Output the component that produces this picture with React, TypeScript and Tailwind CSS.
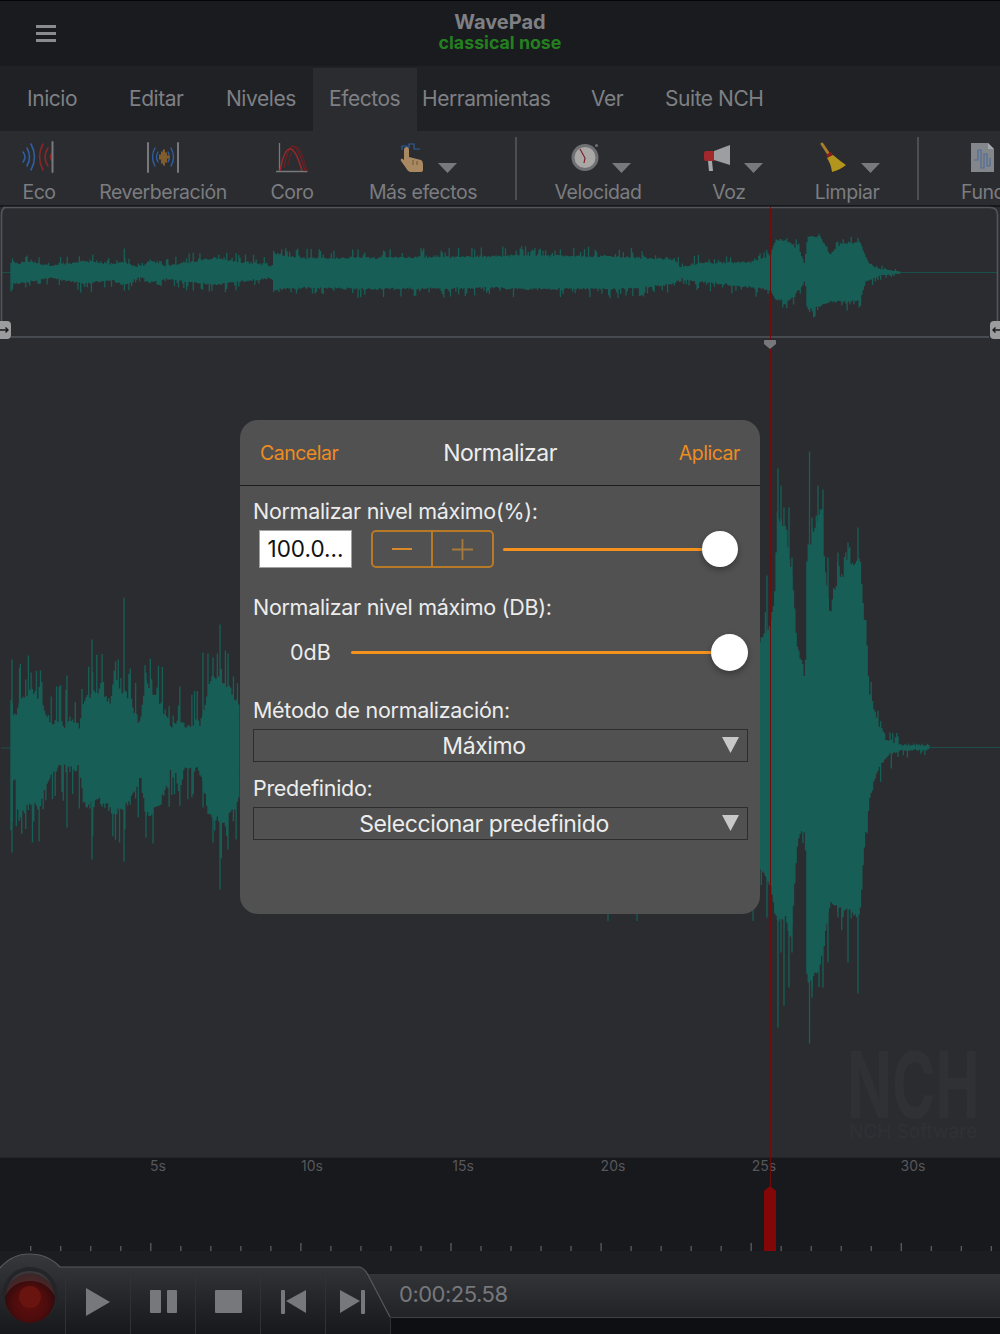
import React from "react";

type P = [number, number];

function interp(pts: P[], x: number) {
  if (x <= pts[0][0]) return pts[0][1];
  for (let i = 1; i < pts.length; i++) {
    if (x <= pts[i][0]) {
      const [a, b] = pts[i - 1];
      const [c, d] = pts[i];
      return b + ((d - b) * (x - a)) / (c - a);
    }
  }
  return pts[pts.length - 1][1];
}

function rng(seed: number) {
  let s = seed;
  return () => {
    s = (s * 16807) % 2147483647;
    return s / 2147483647;
  };
}

function wave(x0: number, x1: number, cy: number, up: P[], lo: P[], spike: number, prob: number, seed: number, extra: [number, number, number][] = []) {
  const r = rng(seed);
  for (let i = 0; i < 10; i++) r();
  let d = "";
  for (let x = x0; x < x1; x += 1.34) {
    let u = interp(up, x);
    let l = interp(lo, x);
    const k = Math.min(1, u / 10 + 0.1);
    if (r() < prob) u += r() * spike * k;
    else u += (r() - 0.3) * spike * 0.2 * k;
    if (r() < prob) l += r() * spike * k;
    else l += (r() - 0.3) * spike * 0.2 * k;
    d += `M${x.toFixed(2)} ${(cy - u).toFixed(1)}V${(cy + l).toFixed(1)}`;
  }
  for (const [x, a, b] of extra) d += `M${x} ${cy - a}V${cy + b}`;
  return d;
}

const miniUp: P[] = [[11, 10], [20, 9], [30, 11], [50, 6], [85, 11], [110, 8], [125, 10], [140, 4], [150, 12], [165, 6], [215, 14], [240, 10], [265, 8], [272, 5], [274, 19], [300, 14], [370, 14], [500, 16], [525, 17], [630, 15], [675, 12], [680, 5], [700, 9], [750, 10], [770, 16], [776, 33], [790, 30], [800, 20], [805, 8], [808, 35], [820, 36], [830, 18], [840, 27], [860, 31], [868, 10], [877, 4], [890, 2], [900, 1]];
const miniLo: P[] = [[11, 11], [30, 9], [50, 5], [85, 11], [110, 7], [125, 12], [140, 4], [150, 10], [165, 6], [215, 12], [240, 9], [272, 5], [274, 17], [300, 15], [370, 16], [500, 15], [525, 16], [630, 16], [675, 11], [680, 5], [700, 9], [750, 14], [770, 17], [776, 27], [790, 27], [800, 16], [805, 8], [808, 37], [830, 29], [860, 28], [866, 8], [880, 3], [890, 2], [900, 1]];

const bigUp: P[] = [[12, 45], [14, 24], [19, 46], [30, 56], [40, 46], [50, 24], [60, 21], [80, 21], [85, 46], [100, 56], [110, 40], [115, 64], [125, 52], [130, 48], [140, 21], [146, 62], [160, 44], [170, 21], [200, 22], [210, 66], [225, 66], [240, 40]];
const bigLo: P[] = [[12, 78], [14, 21], [19, 70], [30, 56], [40, 58], [50, 27], [60, 19], [80, 20], [85, 58], [100, 52], [115, 64], [130, 54], [140, 26], [146, 66], [160, 58], [170, 20], [200, 22], [210, 68], [225, 74], [240, 48]];
const bigUpR: P[] = [[760, 105], [770, 120], [775, 150], [777, 228], [785, 220], [793, 165], [797, 102], [803, 80], [805, 48], [807, 190], [820, 235], [830, 130], [837, 165], [860, 190], [865, 120], [870, 52], [877, 26], [887, 7], [900, 2.5], [930, 1.6]];
const bigLoR: P[] = [[760, 120], [770, 135], [775, 165], [777, 172], [793, 165], [797, 100], [803, 75], [805, 52], [807, 235], [820, 220], [830, 155], [860, 168], [865, 90], [870, 48], [877, 24], [887, 7], [900, 2.5], [930, 1.6]];

const miniPath = wave(11, 900, 272.5, miniUp, miniLo, 10, 0.3, 12345, [[12.5, 14, 17], [124.3, 24, 18]]);
const bigPathL = wave(11, 240, 747.5, bigUp, bigLo, 42, 0.3, 777, [[12, 88, 105], [92, 108, 112], [124, 150, 114], [19.5, 80, 72], [203, 95, 60], [213, 90, 95], [220, 123, 142], [228, 80, 102], [67, 72, 80], [146, 75, 90]]);
const bigPathR = wave(760, 930, 747.5, bigUpR, bigLoR, 24, 0.3, 4242, [[778, 279, 280], [781, 262, 205], [784, 240, 258], [789, 240, 240], [792, 190, 205], [809.5, 296, 296], [812, 230, 250], [818, 262, 220], [823, 258, 240], [828, 190, 215], [858, 220, 246], [838, 195, 170], [848, 205, 215], [767, 172, 170]]);

const tabs = [
  ["Inicio", "left-[27px]"],
  ["Editar", "left-[129px]"],
  ["Niveles", "left-[226px]"],
  ["Efectos", "left-[329px]"],
  ["Herramientas", "left-[422px]"],
  ["Ver", "left-[591px]"],
  ["Suite NCH", "left-[665px]"],
];

const tools = [
  ["Eco", "left-[39px]"],
  ["Reverberación", "left-[163px]"],
  ["Coro", "left-[292px]"],
  ["Más efectos", "left-[423px]"],
  ["Velocidad", "left-[598px]"],
  ["Voz", "left-[729px]"],
  ["Limpiar", "left-[847px]"],
];

const timeLabels = [
  ["5s", "left-[158px]"],
  ["10s", "left-[312px]"],
  ["15s", "left-[463px]"],
  ["20s", "left-[613px]"],
  ["25s", "left-[764px]"],
  ["30s", "left-[913px]"],
];

function Arrow({ cls }: { cls: string }) {
  return (
    <svg className={`absolute top-[163px] w-[19px] h-[10px] ${cls}`} viewBox="0 0 19 10">
      <polygon points="0,0 19,0 9.5,10" fill="#77797d" />
    </svg>
  );
}

function Ticks() {
  const xs: number[] = [];
  for (let i = 0; i < 34; i++) xs.push(i);
  return (
    <svg className="absolute left-0 top-[1240px] w-[1000px] h-[12px]" viewBox="0 0 1000 12">
      {xs.map((i) => {
        const x = 30.7 + i * 30.02;
        const major = (i + 1) % 5 === 0;
        return <line key={i} x1={x} x2={x} y1={major ? 3 : 6} y2={11} stroke="#5c5d61" strokeWidth={1.3} />;
      })}
    </svg>
  );
}

function Label({ cls, children }: { cls: string; children: React.ReactNode }) {
  return <div className={`absolute left-[253px] text-[21.5px] leading-[26px] tracking-[-0.3px] text-[#ececec] whitespace-nowrap ${cls}`}>{children}</div>;
}

function Select({ cls, text }: { cls: string; text: string }) {
  return (
    <div className={`absolute left-[253px] w-[495px] h-[33px] border-[1.5px] border-[#2d2d2d] flex items-center ${cls}`}>
      <div className="w-[460px] text-center text-[23px] leading-[30px] tracking-[-0.4px] text-[#ececec] whitespace-nowrap">{text}</div>
      <svg className="absolute left-[468px] top-[7px] w-[17px] h-[16px]" viewBox="0 0 17 16">
        <polygon points="0,0 17,0 8.5,16" fill="#c8c8c8" />
      </svg>
    </div>
  );
}

export default function App() {
  return (
    <div className="relative w-[1000px] h-[1334px] overflow-hidden bg-[#2b2c30] font-[family-name:Inter,sans-serif]">
      {/* Title bar */}
      <div className="absolute left-0 top-0 w-full h-[66px] bg-[#1a1b1f] border-t border-[#050506]" />
      <div className="absolute left-[36px] top-[25px] w-[20px] flex flex-col gap-[4px]">
        <div className="h-[3px] bg-[#8a8b8e]" />
        <div className="h-[3px] bg-[#8a8b8e]" />
        <div className="h-[3px] bg-[#8a8b8e]" />
      </div>
      <div className="absolute left-0 top-[10px] w-full text-center font-[family-name:'Liberation_Sans',sans-serif] font-bold text-[20px] leading-[24px] text-[#7f8084]">WavePad</div>
      <div className="absolute left-0 top-[32px] w-full text-center font-[family-name:'Liberation_Sans',sans-serif] font-bold text-[17.8px] leading-[22px] text-[#24801f]">classical nose</div>

      {/* Tabs */}
      <div className="absolute left-0 top-[66px] w-full h-[65px] bg-[#202125]" />
      <div className="absolute left-[313px] top-[68px] w-[104px] h-[63px] bg-[#2b2c30]" />
      {tabs.map(([t, c]) => (
        <div key={t} className={`absolute top-[85px] text-[21px] leading-[27px] tracking-[-0.45px] text-[#7e8084] whitespace-nowrap ${c}`}>{t}</div>
      ))}

      {/* Toolbar */}
      {tools.map(([t, c]) => (
        <div key={t} className={`absolute top-[180px] -translate-x-1/2 text-[19.5px] leading-[25px] tracking-[-0.45px] text-[#7b7d80] whitespace-nowrap ${c}`}>{t}</div>
      ))}
      <div className="absolute left-[961px] top-[180px] w-[39px] overflow-hidden text-[19.5px] leading-[25px] tracking-[-0.45px] text-[#7b7d80] whitespace-nowrap">Funciones</div>
      <div className="absolute left-[515px] top-[137px] w-[1.5px] h-[63px] bg-[#4d4e52]" />
      <div className="absolute left-[917px] top-[137px] w-[1.5px] h-[63px] bg-[#4d4e52]" />
      <div className="absolute left-0 top-[205px] w-full h-[2px] bg-[#17181b]" />

      {/* Toolbar icons */}
      <svg className="absolute left-[20px] top-[140px] w-[36px] h-[34px]" viewBox="20 140 36 34" fill="none" strokeWidth="1.6" strokeLinecap="round">
        <path d="M23 152Q27 157 23 162M27 148Q32 157 27 166M31 144Q38 157 31 170" stroke="#2f5f9e" />
        <path d="M43 144Q36 157 43 170M48 148Q42 157 48 166M52 153Q49 157 52 161" stroke="#8c2525" />
        <path d="M52.5 142V172" stroke="#77797c" strokeWidth="2" />
      </svg>
      <svg className="absolute left-[145px] top-[140px] w-[36px] h-[34px]" viewBox="145 140 36 34" fill="none" strokeWidth="1.4" strokeLinecap="round">
        <path d="M148 143V172M178 143V172" stroke="#77797c" strokeWidth="2" />
        <path d="M155 148Q150 157 155 166M158 152Q155 157 158 162M171 148Q176 157 171 166M168 152Q171 157 168 162" stroke="#2f5f9e" />
        <path d="M160 155V159M162 152V163M164 150V165M166 153V162M168 156V158" stroke="#a8722b" />
      </svg>
      <svg className="absolute left-[274px] top-[140px] w-[36px] h-[34px]" viewBox="274 140 36 34" fill="none" strokeWidth="1.3">
        <path d="M279.5 143V171.5M276 171.5H307.5" stroke="#77797c" />
        <path d="M288 165Q292 147 296 147Q301 147 307 171" stroke="#5e2226" />
        <path d="M284 168Q288 146 293 146Q298 146 305 171" stroke="#6e2024" />
        <path d="M280 171Q284 149 290 149Q296 149 302 171" stroke="#952a2c" strokeWidth="1.5" />
      </svg>
      <svg className="absolute left-[398px] top-[142px] w-[28px] h-[32px]" viewBox="398 142 28 32">
        <path d="M402 150V146H407V150M409 148V144H414V149H420" fill="none" stroke="#2f5f9e" strokeWidth="1.2" />
        <path d="M404 150Q404 147 406.5 147Q409 147 409 150V157L421 160Q423 161 423 165V170Q423 172 420 172H411Q408 172 406 168L401 161Q400 159 402 158.5L404 160Z" fill="#a88962" />
        <path d="M413 160V165M417 161V165" stroke="#6d5639" strokeWidth="1" />
      </svg>
      <Arrow cls="left-[438px]" />
      <svg className="absolute left-[569px] top-[141px] w-[32px] h-[32px]" viewBox="569 141 32 32">
        <circle cx="585" cy="157.5" r="13.5" fill="#6f7073" />
        <circle cx="585" cy="157.5" r="10.5" fill="#a9a8a7" />
        <path d="M580 149L585 158L584 163" fill="none" stroke="#7d2024" strokeWidth="1.2" />
        <circle cx="596.5" cy="145.5" r="1.5" fill="#6f7073" />
      </svg>
      <Arrow cls="left-[612px]" />
      <svg className="absolute left-[702px] top-[143px] w-[30px] h-[30px]" viewBox="702 143 30 30">
        <path d="M708 161H712L713 171H709Z" fill="#a5a6a8" />
        <rect x="704" y="151" width="11" height="10" rx="2" fill="#a3282c" />
        <path d="M714 151L730 145V165L714 160Z" fill="#9d9ea1" />
      </svg>
      <Arrow cls="left-[744px]" />
      <svg className="absolute left-[818px] top-[141px] w-[30px] h-[32px]" viewBox="818 141 30 32">
        <path d="M822 144L828 153" stroke="#a97b2b" strokeWidth="3" strokeLinecap="round" />
        <path d="M826 155L831 152L833 155L828 158Z" fill="#8f1c1c" />
        <path d="M827 158L833 155Q840 161 846 165Q840 170 832 172Q831 164 827 158Z" fill="#b3941d" />
      </svg>
      <Arrow cls="left-[861px]" />
      <svg className="absolute left-[970px] top-[142px] w-[26px] h-[32px]" viewBox="970 142 26 32">
        <path d="M971 143H988L994 149V172H971Z" fill="#83868b" />
        <path d="M988 143L994 149H988Z" fill="#a5a8ac" />
        <path d="M974 160H978V150H981V168H984V154H987V166H990V158" fill="none" stroke="#4f6d97" strokeWidth="1.2" />
      </svg>

      {/* Overview waveform */}
      <svg className="absolute left-0 top-0 w-[1000px] h-[345px]" viewBox="0 0 1000 345">
        <path d="M1 272.5H11M900 272.5H998" stroke="#1c4f4a" strokeWidth="1" />
        <path d="M3 207.5H990Q997.5 207.5 997.5 215V322M1.5 322V215Q1.5 208 6 207.5M11 337H989" fill="none" stroke="#50565c" strokeWidth="1.6" />
        <path d={miniPath} stroke="#175f56" strokeWidth="1.34" fill="none" />
      </svg>
      <div className="absolute left-[-8px] top-[321px] w-[19px] h-[18px] rounded-[4px] bg-[#9c9c9f] flex items-center justify-end pr-[2px]">
        <svg className="w-[9px] h-[8px]" viewBox="0 0 9 8"><path d="M0 4H8M5.5 1.5L8 4L5.5 6.5" fill="none" stroke="#1a1a1c" strokeWidth="1.4" /></svg>
      </div>
      <div className="absolute left-[990px] top-[321px] w-[19px] h-[18px] rounded-[4px] bg-[#9c9c9f] flex items-center pl-[2px]">
        <svg className="w-[9px] h-[8px]" viewBox="0 0 9 8"><path d="M9 4H1M3.5 1.5L1 4L3.5 6.5" fill="none" stroke="#1a1a1c" strokeWidth="1.4" /></svg>
      </div>

      {/* Main waveform */}
      <svg className="absolute left-0 top-[345px] w-[1000px] h-[813px]" viewBox="0 345 1000 813">
        <path d="M1 748H11M930 747.5H1000" stroke="#1c4f4a" strokeWidth="1" />
        <path d={bigPathL} stroke="#175f56" strokeWidth="1.34" fill="none" />
        <path d={bigPathR} stroke="#175f56" strokeWidth="1.34" fill="none" />
        <path d="M608 900V921M637 900V921M753 900V921" stroke="#175f56" strokeWidth="1.2" />
      </svg>

      {/* Watermark */}
      <div className="absolute left-[847px] top-[1052px] origin-left scale-x-[0.64] font-[family-name:'Liberation_Sans',sans-serif] font-bold text-[92px] leading-[66px] text-[#303135]">NCH</div>
      <div className="absolute left-[849px] top-[1120px] font-[family-name:'Liberation_Sans',sans-serif] text-[19px] leading-[24px] text-[#303135] whitespace-nowrap">NCH Software</div>

      {/* Timeline */}
      <div className="absolute left-0 top-[1157px] w-full h-[94px] bg-[#18191d] border-t border-[#232428]" />
      <div className="absolute left-0 top-[1251px] w-full h-[83px] bg-[#1c1d21]" />
      {timeLabels.map(([t, c]) => (
        <div key={t} className={`absolute top-[1158px] -translate-x-1/2 font-[family-name:'Liberation_Sans',sans-serif] text-[14px] leading-[16px] text-[#56575b] ${c}`}>{t}</div>
      ))}
      <Ticks />

      {/* Playhead */}
      <div className="absolute left-[769.5px] top-[207px] w-[1.5px] h-[985px] bg-[#6f0c0e]" />
      <svg className="absolute left-[764px] top-[1186px] w-[12px] h-[65px]" viewBox="0 0 12 65">
        <polygon points="0,5 6,0 12,5 12,65 0,65" fill="#840708" />
      </svg>
      <svg className="absolute left-[763px] top-[339px] w-[14px] h-[11px]" viewBox="0 0 14 11">
        <path d="M1 2Q1 1 2 1H12Q13 1 13 2V5L7 10L1 5Z" fill="#77787c" />
      </svg>

      {/* Transport */}
      <div className="absolute left-0 top-[1274px] w-full h-[44px] bg-gradient-to-b from-[#333438] to-[#222327] border-b border-[#3f4044]" />
      <div className="absolute left-0 top-[1318px] w-full h-[16px] bg-[#0e0f13]" />
      <svg className="absolute left-0 top-[1250px] w-[400px] h-[84px]" viewBox="0 1250 400 84">
        <defs>
          <linearGradient id="bar" x1="0" y1="0" x2="0" y2="1">
            <stop offset="0" stopColor="#37383c" />
            <stop offset="1" stopColor="#17181c" />
          </linearGradient>
          <radialGradient id="rec" cx="0.5" cy="0.6" r="0.55">
            <stop offset="0" stopColor="#5e0f0d" />
            <stop offset="0.6" stopColor="#4e0c0c" />
            <stop offset="1" stopColor="#2a0b0d" />
          </radialGradient>
        </defs>
        <path d="M0 1334V1268Q12 1254 29 1254Q48 1254 60 1267H358Q364 1267 368 1275L390 1317V1334Z" fill="url(#bar)" />
        <path d="M0 1268Q12 1254 29 1254Q48 1254 60 1267H358Q364 1267 368 1275L390 1317" fill="none" stroke="#57585c" strokeWidth="1.2" />
        <path d="M65.5 1268V1334M130.5 1268V1334M195.5 1268V1334M260.5 1268V1334M325.5 1268V1334M390.5 1317V1334" stroke="#303135" strokeWidth="1" />
        <circle cx="30" cy="1295" r="28" fill="#242529" />
        <circle cx="30" cy="1298" r="25" fill="url(#rec)" />
        <path d="M5 1296Q10 1271 30 1271Q50 1271 55 1296Q46 1281 30 1281Q14 1281 5 1296Z" fill="#77787c" opacity="0.25" />
        <circle cx="30" cy="1297" r="11" fill="#6a1410" />
        <polygon points="86,1288 110,1302 86,1316" fill="#77787c" />
        <rect x="150" y="1290" width="11" height="23" rx="1" fill="#77787c" />
        <rect x="167" y="1290" width="10" height="23" rx="1" fill="#77787c" />
        <rect x="215" y="1290" width="27" height="23" rx="1" fill="#77787c" />
        <rect x="281" y="1290" width="4" height="24" rx="1" fill="#77787c" />
        <polygon points="286,1301 306,1290 306,1313" fill="#77787c" />
        <polygon points="340,1290 360,1301 340,1313" fill="#77787c" />
        <rect x="361" y="1290" width="4" height="24" rx="1" fill="#77787c" />
      </svg>
      <div className="absolute left-[399px] top-[1279px] text-[22px] leading-[30px] tracking-[-0.5px] text-[#77787c] whitespace-nowrap">0:00:25.58</div>

      {/* Dialog */}
      <div className="absolute left-[240px] top-[420px] w-[520px] h-[494px] rounded-[18px] bg-[#515151]">
        <div className="absolute left-0 top-[65px] w-full h-px bg-[#1d1d1d]" />
      </div>
      <div className="absolute left-[260px] top-[439px] text-[19.5px] leading-[28px] tracking-[-0.5px] text-[#ee8c1f]">Cancelar</div>
      <div className="absolute left-0 top-[438px] w-full text-center text-[23px] leading-[30px] tracking-[-0.5px] text-[#ededed]">Normalizar</div>
      <div className="absolute right-[260px] top-[439px] text-[19.5px] leading-[28px] tracking-[-0.45px] text-[#ee8c1f]">Aplicar</div>

      <Label cls="top-[498px]">Normalizar nivel máximo(%):</Label>
      <div className="absolute left-[259px] top-[530px] w-[93px] h-[38px] bg-white border border-[#a0a0a0] flex items-center justify-center text-[22.5px] text-[#111]">100.0...</div>
      <div className="absolute left-[371px] top-[530px] w-[123px] h-[38px] rounded-[5px] border-2 border-[#b97a28] flex">
        <div className="w-[60px] h-full border-r-2 border-[#b97a28] flex items-center justify-center">
          <div className="w-[20px] h-[2px] bg-[#d9892a]" />
        </div>
        <div className="flex-1 flex items-center justify-center">
          <svg className="w-[21px] h-[21px]" viewBox="0 0 21 21"><path d="M0 10.5H21M10.5 0V21" stroke="#a67a3d" strokeWidth="1.8" /></svg>
        </div>
      </div>
      <div className="absolute left-[503px] top-[548px] w-[218px] h-[3px] rounded-full bg-[#f5921e]" />
      <div className="absolute left-[702px] top-[531px] w-[36px] h-[36px] rounded-full bg-white shadow-[0_3px_6px_rgba(0,0,0,0.3)]" />

      <Label cls="top-[594px]">Normalizar nivel máximo (DB):</Label>
      <div className="absolute left-[290px] top-[638px] text-[21.5px] leading-[28px] text-[#ececec]">0dB</div>
      <div className="absolute left-[351px] top-[651px] w-[380px] h-[3px] rounded-full bg-[#f5921e]" />
      <div className="absolute left-[711px] top-[634px] w-[37px] h-[37px] rounded-full bg-white shadow-[0_3px_6px_rgba(0,0,0,0.3)]" />

      <Label cls="top-[697px]">Método de normalización:</Label>
      <Select cls="top-[729px]" text="Máximo" />
      <Label cls="top-[775px]">Predefinido:</Label>
      <Select cls="top-[807px]" text="Seleccionar predefinido" />
    </div>
  );
}
